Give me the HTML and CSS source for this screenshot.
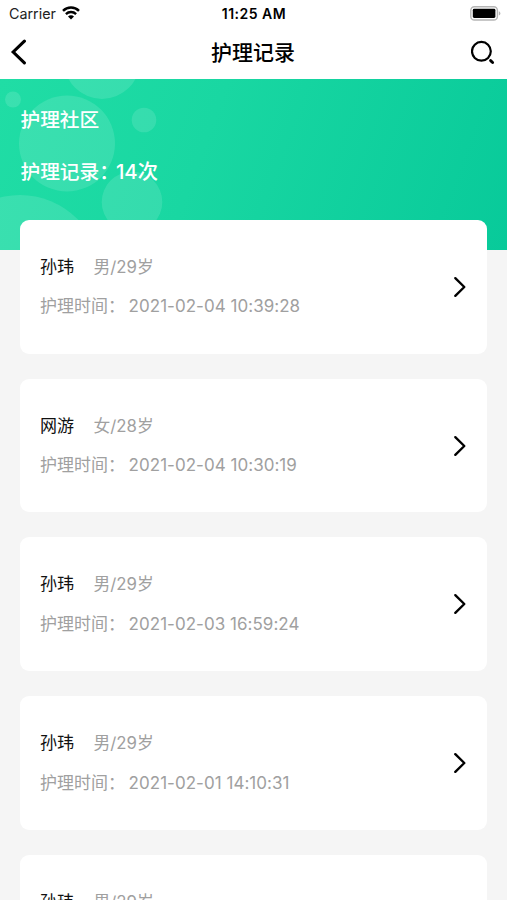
FILE: index.html
```html
<!DOCTYPE html>
<html lang="zh-CN">
<head>
  <meta charset="UTF-8">
  <meta name="viewport" content="width=device-width, initial-scale=1.0">
  <title>护理记录</title>
  <link rel="stylesheet" href="styles.css">
</head>
<body>
  <header class="header">
    <div class="status-bar">
      <div class="carrier">
        <span>Carrier</span>
        <svg class="wifi" viewBox="0 0 18 14" width="18" height="14">
          <path d="M1 4.8a11.5 11.5 0 0 1 16 0" fill="none" stroke="#000" stroke-width="2.5"/>
          <path d="M3.9 8.1a7.2 7.2 0 0 1 10.2 0" fill="none" stroke="#000" stroke-width="2.3"/>
          <path d="M6 10.6a4.2 4.2 0 0 1 6 0L9 13.6z" fill="#000"/>
        </svg>
      </div>
      <span class="time">11:25 AM</span>
      <svg class="battery" viewBox="0 0 31 15" width="31" height="15">
        <rect x="0.8" y="0.8" width="26.6" height="13.2" rx="3.6" fill="#fff" stroke="#b5b5b5" stroke-width="1.4"/>
        <rect x="2.8" y="2.8" width="22.6" height="9.2" rx="1.4" fill="#000"/>
        <path d="M28.8 5.2q1.6.6 1.6 2.2t-1.6 2.2z" fill="#b5b5b5"/>
      </svg>
    </div>
    <nav class="navbar">
      <svg class="back" viewBox="0 0 16 26" width="16" height="26">
        <path d="M14.4 2.2L3.2 13l11.2 10.8" fill="none" stroke="#000" stroke-width="3.1" stroke-linecap="round"/>
      </svg>
      <h1>护理记录</h1>
      <svg class="search" viewBox="0 0 25 25" width="25" height="25">
        <circle cx="10.4" cy="11.3" r="9.4" fill="none" stroke="#000" stroke-width="2.2"/>
        <path d="M19.6 20.6l2 1.9" stroke="#000" stroke-width="2.9" stroke-linecap="round"/>
      </svg>
    </nav>
  </header>

  <section class="banner">
    <svg class="bubbles" viewBox="0 0 507 171" width="507" height="171">
      <g fill="#fff" fill-opacity="0.12">
        <circle cx="102" cy="-18" r="38"/>
        <circle cx="13" cy="20.5" r="8"/>
        <circle cx="67" cy="64.5" r="48"/>
        <circle cx="144" cy="41" r="12.3"/>
        <circle cx="132" cy="123" r="30.3"/>
        <circle cx="20" cy="197" r="81"/>
      </g>
    </svg>
    <p class="banner-text">护理社区</p>
    <p class="banner-text">护理记录：<span class="count">14次</span></p>
  </section>

  <main class="list">
    <div class="card">
      <div class="info">
        <div class="person"><span class="name">孙玮</span><span class="meta">男/29岁</span></div>
        <div class="record">护理时间：<span class="date">2021-02-04 10:39:28</span></div>
      </div>
      <svg class="arrow" viewBox="0 0 14 22" width="14" height="22"><path d="M2.3 2.2l9 8.8-9 8.8"/></svg>
    </div>
    <div class="card">
      <div class="info">
        <div class="person"><span class="name">网游</span><span class="meta">女/28岁</span></div>
        <div class="record">护理时间：<span class="date">2021-02-04 10:30:19</span></div>
      </div>
      <svg class="arrow" viewBox="0 0 14 22" width="14" height="22"><path d="M2.3 2.2l9 8.8-9 8.8"/></svg>
    </div>
    <div class="card">
      <div class="info">
        <div class="person"><span class="name">孙玮</span><span class="meta">男/29岁</span></div>
        <div class="record">护理时间：<span class="date">2021-02-03 16:59:24</span></div>
      </div>
      <svg class="arrow" viewBox="0 0 14 22" width="14" height="22"><path d="M2.3 2.2l9 8.8-9 8.8"/></svg>
    </div>
    <div class="card">
      <div class="info">
        <div class="person"><span class="name">孙玮</span><span class="meta">男/29岁</span></div>
        <div class="record">护理时间：<span class="date">2021-02-01 14:10:31</span></div>
      </div>
      <svg class="arrow" viewBox="0 0 14 22" width="14" height="22"><path d="M2.3 2.2l9 8.8-9 8.8"/></svg>
    </div>
    <div class="card">
      <div class="info">
        <div class="person"><span class="name">孙玮</span><span class="meta">男/29岁</span></div>
      </div>
    </div>
  </main>
</body>
</html>
```
FILE: styles.css
```css
* {
  box-sizing: border-box;
}

body {
  margin: 0;
  height: 900px;
  overflow: hidden;
  background-color: #f5f5f5;
  font-family: Inter, "Noto Sans CJK SC", sans-serif;
}

.header {
  height: 79px;
  background-color: #fff;
}

.status-bar {
  display: grid;
  grid-template-columns: 1fr auto 1fr;
  align-items: center;
  height: 27px;
  padding: 0 6px 0 9px;
  font-size: 14px;
  line-height: 27px;
}

.carrier {
  display: flex;
  align-items: center;
  gap: 6px;
  color: #222;
  font-size: 14.3px;
}

.wifi {
  margin-top: -2px;
}

.time {
  margin-left: -2px;
  font-weight: 600;
  letter-spacing: 0.5px;
}

.battery {
  justify-self: end;
}

.navbar {
  display: flex;
  align-items: center;
  justify-content: space-between;
  height: 50px;
  padding: 0 11px 0 10px;
}

h1 {
  margin: 1px 0 0 9px;
  font-size: 21px;
  font-weight: 500;
  line-height: 50px;
}

.banner {
  position: relative;
  height: 171px;
  padding: 27px 20.5px 0;
  background: linear-gradient(110deg, #20dda5 0%, #19d7a2 40%, #08ca9a 100%);
  overflow: hidden;
}

.bubbles {
  position: absolute;
  top: 0;
  left: 0;
}

.banner-text {
  position: relative;
  margin: 0 0 24px;
  color: #fff;
  font-size: 19.7px;
  font-weight: 500;
  line-height: 28px;
}

.count {
  margin-left: -3px;
  font-size: 20.3px;
}

.list {
  position: relative;
  display: flex;
  flex-direction: column;
  gap: 25px;
  margin-top: -30.2px;
  padding: 0 19.6px 0 20.4px;
}

.card {
  display: flex;
  flex-shrink: 0;
  align-items: flex-start;
  justify-content: space-between;
  height: 133.8px;
  padding: 34px 20px 0 19.6px;
  border-radius: 9px;
  background-color: #fff;
}

.person,
.record {
  height: 26px;
  line-height: 26px;
  font-size: 17px;
  white-space: nowrap;
}

.person {
  display: flex;
  gap: 19.5px;
  margin-bottom: 13.5px;
}

.name {
  color: #111;
}

.meta,
.record {
  color: #a0a0a0;
}

.meta {
  font-size: 16.8px;
}

.date {
  margin-left: 3.6px;
  letter-spacing: 0.03px;
}

.arrow {
  margin-top: 22px;
}

.arrow path {
  fill: none;
  stroke: #000;
  stroke-width: 2.4;
  stroke-linecap: round;
  stroke-linejoin: round;
}
```
